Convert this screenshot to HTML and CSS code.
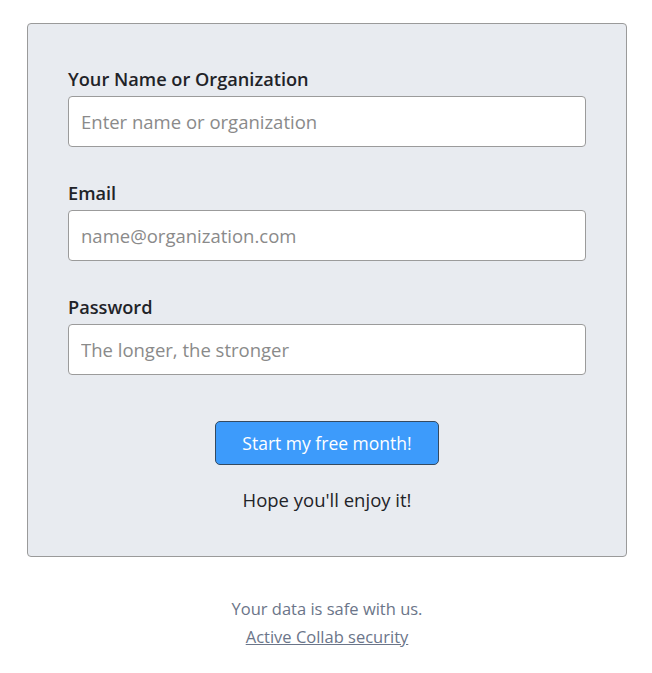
FILE: index.html
```html
<!DOCTYPE html>
<html>
<head>
<meta charset="utf-8">
<link rel="stylesheet" href="styles.css">
</head>
<body>
<div class="page">
  <form class="card">
    <div class="field">
      <label class="label">Your Name or Organization</label>
      <input class="input" type="text" placeholder="Enter name or organization">
    </div>
    <div class="field">
      <label class="label">Email</label>
      <input class="input" type="text" placeholder="name@organization.com">
    </div>
    <div class="field">
      <label class="label">Password</label>
      <input class="input" type="password" placeholder="The longer, the stronger">
    </div>
    <div class="actions">
      <button class="btn" type="button">Start my free month!</button>
      <p class="hope">Hope you'll enjoy it!</p>
    </div>
  </form>
  <div class="footer">
    <p class="safe">Your data is safe with us.</p>
    <a class="link" href="#">Active Collab security</a>
  </div>
</div>
</body>
</html>
```
FILE: styles.css
```css
* { box-sizing: border-box; }
html, body { margin: 0; padding: 0; background: #ffffff; }
body { font-family: "Open Sans", "Noto Sans", sans-serif; color: #1f2328; }
.page { padding: 23px 25px 0 27px; }
.card {
  width: 600px;
  height: 534px;
  background: #e8ebf0;
  border: 1px solid #9a9a9a;
  border-radius: 4px;
  padding: 43px 40px 0 40px;
  display: flex;
  flex-direction: column;
}
.field { display: flex; flex-direction: column; margin-bottom: 34px; }
.label { font-size: 18.2px; font-weight: 600; line-height: 24px; margin-bottom: 5px; color: #1f2328; }
.input {
  width: 518px;
  height: 51px;
  border: 1px solid #9b9b9b;
  border-radius: 4px;
  background: #fff;
  padding: 0 12px;
  font-family: inherit;
  font-size: 18.5px;
  color: #333;
}
.input::placeholder { color: #8a8a8a; }
.actions { display: flex; flex-direction: column; align-items: center; margin-top: 12px; }
.btn {
  width: 224px;
  height: 44px;
  background: #3d9bfb;
  border: 1px solid #344a60;
  border-radius: 5px;
  color: #fff;
  font-family: inherit;
  font-size: 17.5px;
  font-weight: 500;
  padding: 0;
}
.hope { margin: 22px 0 0; font-size: 18.5px; line-height: 26px; color: #1f2328; }
.footer { text-align: center; width: 600px; margin-top: 38px; color: #6b7589; font-size: 16.5px; line-height: 28px; }
.safe { margin: 0; }
.link { color: #6b7589; text-decoration: underline; }
```
